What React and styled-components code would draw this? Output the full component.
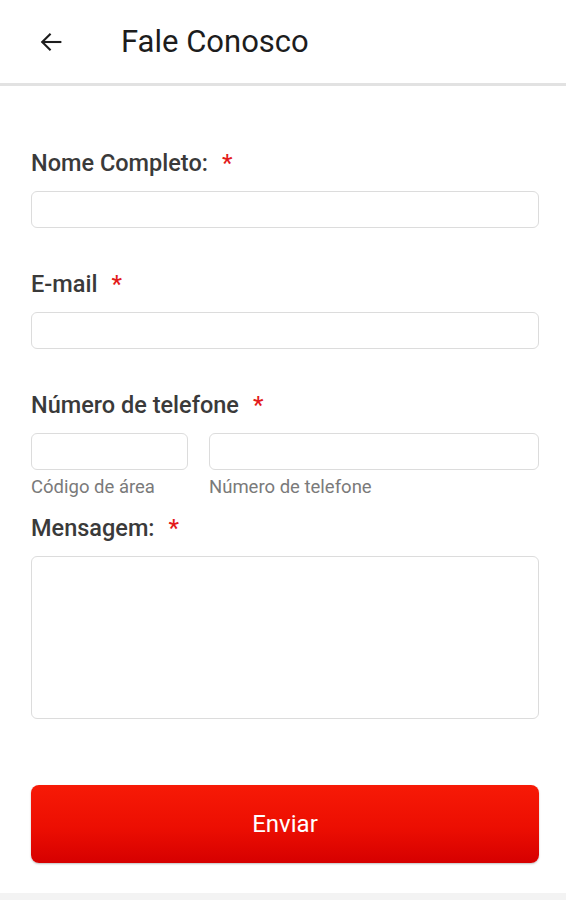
import React from 'react'
import styled, { createGlobalStyle } from 'styled-components'

const GlobalStyle = createGlobalStyle`
    body {
        margin:0;
        background:#fff;
        font-family:Roboto, "Liberation Sans", sans-serif;
    }
`;

const Page = styled.div`
    width:566px;
    height:900px;
    display:flex;
    flex-direction:column;
    background:#fff;
`;
const Header = styled.header`
    height:86px;
    display:flex;
    align-items:center;
    padding-left:36px;
    border-bottom:3px solid #e2e2e2;
    box-sizing:border-box;
    flex-shrink:0;
`;
const Back = styled.button`
    border:none;
    background:none;
    padding:0;
    width:30px;
    height:30px;
    display:flex;
    align-items:center;
    justify-content:center;
    cursor:pointer;
`;
const Title = styled.h1`
    margin:0 0 0 55px;
    font-size:31px;
    font-weight:400;
    color:#1d1d1d;
`;
const Form = styled.form`
    flex:1;
    padding:65px 27px 0 31px;
    display:flex;
    flex-direction:column;
`;
const Field = styled.div`
    display:flex;
    flex-direction:column;
    margin-bottom:${p => p.$gap || 44}px;
`;
const Label = styled.label`
    display:block;
    height:24px;
    font-size:23.5px;
    line-height:24px;
    font-weight:500;
    color:#3a3a3a;
    margin-bottom:16px;
    white-space:nowrap;
`;
const Star = styled.span`
    color:#e31b1b;
    margin-left:14px;
`;
const Input = styled.input`
    height:37px;
    width:100%;
    box-sizing:border-box;
    border:1.5px solid #dcdcdc;
    border-radius:6px;
    padding:0 10px;
    font-size:16px;
    outline:none;
`;
const PhoneRow = styled.div`
    display:grid;
    grid-template-columns:157px 1fr;
    column-gap:21px;
`;
const PhoneCol = styled.div`
    display:flex;
    flex-direction:column;
`;
const Hint = styled.span`
    margin-top:6px;
    font-size:18.5px;
    line-height:22px;
    color:#7a7a7a;
`;
const Message = styled.textarea`
    height:163px;
    width:100%;
    box-sizing:border-box;
    border:1.5px solid #dcdcdc;
    border-radius:6px;
    resize:none;
    outline:none;
    font-family:inherit;
`;
const Send = styled.button`
    margin-top:22px;
    height:78px;
    width:100%;
    border:none;
    border-radius:8px;
    background:linear-gradient(180deg, #f71a06 0%, #ec0e02 55%, #d60000 100%);
    box-shadow:0 1px 2px rgba(0,0,0,0.25);
    color:#fff;
    font-family:Roboto, sans-serif;
    font-size:24px;
    cursor:pointer;
`;
const Footer = styled.div`
    height:7px;
    background:#f3f3f3;
    flex-shrink:0;
`;

function App() {
  return (
    <Page>
      <GlobalStyle/>
      <Header>
        <Back aria-label="Voltar">
          <svg width="28" height="28" viewBox="0 0 24 24" fill="none" stroke="#1d1d1d" strokeWidth="1.8" strokeLinecap="square">
            <path d="M20 12H5"/>
            <path d="M11 5.5L4.5 12L11 18.5"/>
          </svg>
        </Back>
        <Title>Fale Conosco</Title>
      </Header>
      <Form>
        <Field>
          <Label htmlFor="nome">Nome Completo:<Star>*</Star></Label>
          <Input id="nome" type="text"/>
        </Field>
        <Field>
          <Label htmlFor="email">E-mail<Star>*</Star></Label>
          <Input id="email" type="email"/>
        </Field>
        <Field $gap={18}>
          <Label htmlFor="ddd">Número de telefone<Star>*</Star></Label>
          <PhoneRow>
            <PhoneCol>
              <Input id="ddd" type="tel"/>
              <Hint>Código de área</Hint>
            </PhoneCol>
            <PhoneCol>
              <Input id="tel" type="tel"/>
              <Hint>Número de telefone</Hint>
            </PhoneCol>
          </PhoneRow>
        </Field>
        <Field $gap={44}>
          <Label htmlFor="msg">Mensagem:<Star>*</Star></Label>
          <Message id="msg"/>
        </Field>
        <Send type="button">Enviar</Send>
      </Form>
      <Footer/>
    </Page>
  )
}

export default App
